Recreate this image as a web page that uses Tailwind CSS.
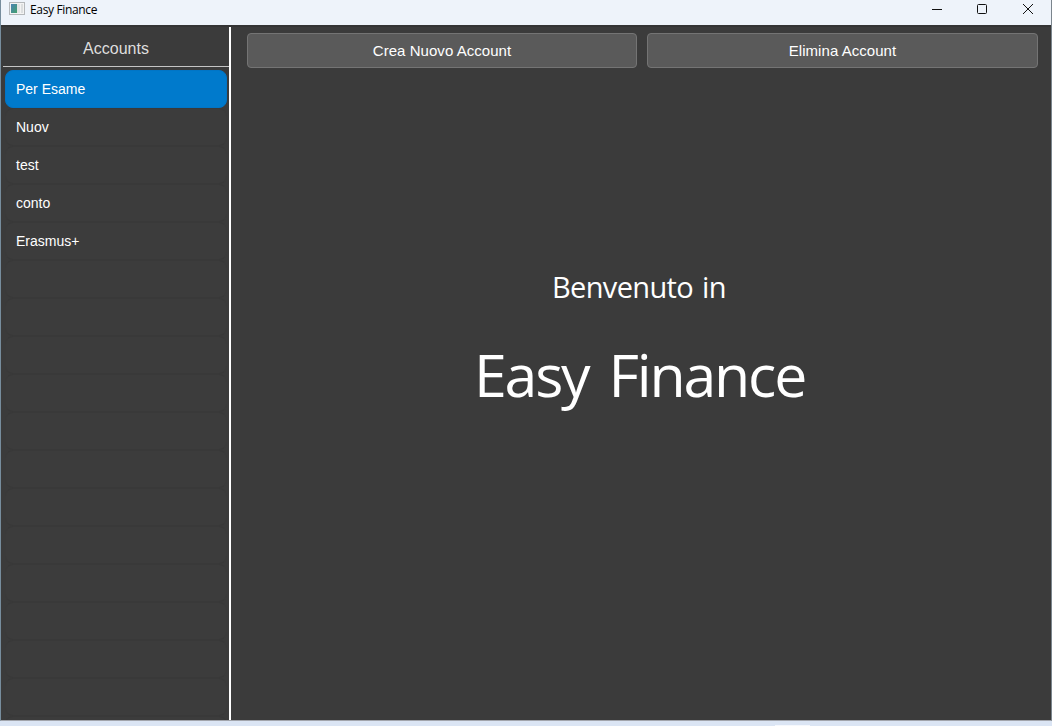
<!DOCTYPE html>
<html lang="it">
<head>
<meta charset="utf-8">
<title>Easy Finance</title>
<script src="https://cdn.jsdelivr.net/npm/@tailwindcss/browser@4"></script>
</head>
<body class="w-[1052px] h-[726px] overflow-hidden bg-[#dbe5f4] font-['Liberation_Sans',Arial,sans-serif] text-white">
<div class="flex flex-col h-[721px] border-x border-b border-l-[#778d9d] border-r-[#7b858d] border-b-[#a2a5ac] bg-[#3b3b3b]">
  <header class="flex h-[25px] shrink-0 bg-[#eef3fa] text-black">
    <svg class="mt-[2px] ml-2 shrink-0" width="16" height="14" viewBox="0 0 16 14">
      <defs><linearGradient id="g" x1="0" y1="0" x2="1" y2="1"><stop offset="0" stop-color="#4b82b5"/><stop offset="1" stop-color="#43a06c"/></linearGradient></defs>
      <rect x=".5" y=".5" width="15" height="12" fill="#f3f3f3" stroke="#b5b8bb"/>
      <rect x="2" y="2" width="6" height="9" fill="url(#g)"/>
      <rect x="8" y="2" width="3" height="9" fill="#e2e5e5"/>
      <rect x="12" y="2" width="2" height="9" fill="#dcdedf"/>
    </svg>
    <span class="ml-[5px] mt-[1px] text-[12px] leading-[18px] tracking-[-0.35px] font-['Open_Sans',sans-serif]">Easy Finance</span>
    <svg class="ml-auto mr-[17px] mt-[3px] shrink-0" width="103" height="12" viewBox="0 0 103 12" fill="none" stroke="#111" stroke-width="1">
      <path d="M1 6.500h10"/>
      <rect x="46.500" y="1.500" width="9" height="9" rx="1"/>
      <path d="M92 1l10 10M102 1L92 11"/>
    </svg>
  </header>
  <div class="flex flex-1 min-h-0 border-t-2 border-[#343434]">
    <aside class="flex flex-col w-[230px] border-r-2 border-white pl-[2px] overflow-hidden">
      <h2 class="h-10 shrink-0 border-b border-[#c4c4c4] text-center text-[16px] leading-[43px] text-[#dedede]">Accounts</h2>
      <ul class="flex flex-col pt-[3px] pl-[2px] pr-[2px] text-[14px] [&>li]:h-[38px] [&>li]:shrink-0 [&>li]:rounded-[8px] [&>li]:border [&>li]:border-x-[#3b3b3b] [&>li]:border-y-[#393939] [&>li]:bg-[#3c3c3c] [&>li]:pl-[10px] [&>li]:leading-[36px]">
        <li class="border-[#0175c6]! bg-[#007acc]!">Per Esame</li>
        <li>Nuov</li><li>test</li><li>conto</li><li>Erasmus+</li>
        <li></li><li></li><li></li><li></li><li></li><li></li><li></li><li></li><li></li><li></li><li></li><li></li><li></li>
      </ul>
    </aside>
    <main class="flex flex-col flex-1 pt-[6px] pl-4 pr-[13px]">
      <div class="flex gap-[10px]">
        <button class="w-[390px] h-[35px] pt-[2px] rounded-[4px] border border-[#747474] bg-[#5a5a5a] text-[15px] tracking-[0.05px]">Crea Nuovo Account</button>
        <button class="w-[391px] h-[35px] pt-[2px] rounded-[4px] border border-[#747474] bg-[#5a5a5a] text-[15px] tracking-[0.05px]">Elimina Account</button>
      </div>
      <p class="mt-[199px] ml-[305px] text-[29px] leading-10 tracking-[-0.65px] [word-spacing:2px] whitespace-nowrap font-['Open_Sans',sans-serif]">Benvenuto in</p>
      <h1 class="mt-[27px] ml-[227px] text-[59px] leading-[80px] tracking-[-2.2px] [word-spacing:7px] whitespace-nowrap font-['Open_Sans',sans-serif]">Easy Finance</h1>
    </main>
  </div>
</div>
<div class="ml-[775px] mt-1 w-[35px] h-px bg-[#f5f8fd]"></div>
</body>
</html>
